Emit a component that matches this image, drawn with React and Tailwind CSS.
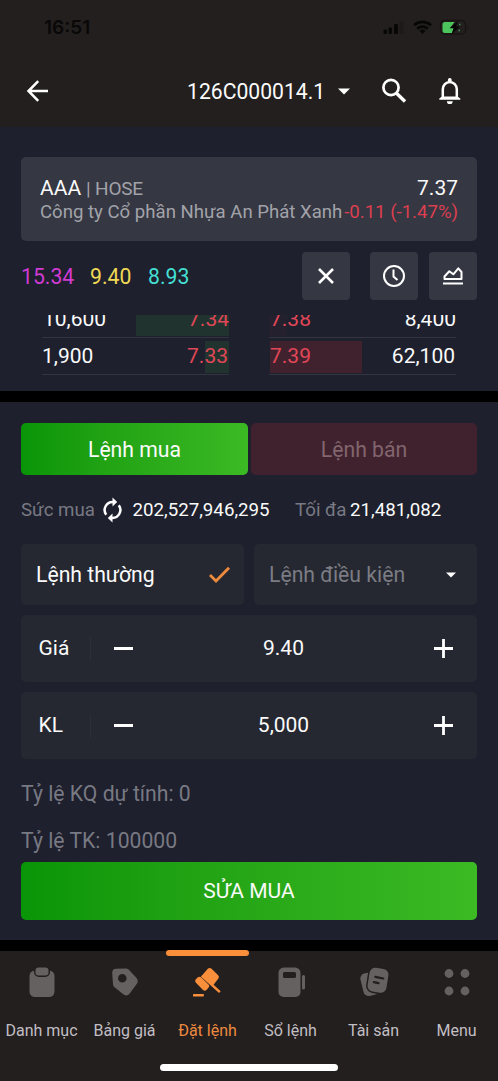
import React from 'react';

function StatusBar() {
  return (
    <div className="flex h-[54px] items-center justify-between pl-[44px] pr-[27px] pt-px text-[#090808]">
      <span className="font-['Inter'] text-[19px] leading-none font-semibold">16:51</span>
      <svg width="90" height="20" viewBox="0 0 90 20">
        <g fill="#080707">
          <rect x="2.5" y="11.500" width="3.500" height="4.500" rx="1" />
          <rect x="7.500" y="9.500" width="3.500" height="6.500" rx="1" />
          <rect x="13" y="6" width="4" height="10" rx="1" />
          <rect x="18.500" y="3" width="4" height="13" rx="1" fill="#1c1918" />
          <path d="M41.500 16l-3-3a4.300 4.300 0 0 1 6 0z" />
        </g>
        <g fill="none" stroke="#080707" strokeWidth="2.600">
          <path d="M33 7.300a12.300 12.300 0 0 1 17 0" />
          <path d="M36.200 10.700a7.700 7.700 0 0 1 10.600 0" />
        </g>
        <rect x="59.500" y="2.500" width="25" height="13.500" rx="4" fill="none" stroke="#171413" strokeWidth="1.300" />
        <path d="M86.500 7v4.500c1.300-.8 1.300-3.700 0-4.500z" fill="#171413" />
        <path d="M64 4h9.500l-4 5.500h3.500l-2 5.500H64a2.500 2.500 0 0 1-2.500-2.500V6.500A2.500 2.500 0 0 1 64 4z" fill="#4cc65c" />
        <path d="M77 3l-8.500 7.300h4l-1.700 5.700 8.200-7.500h-4z" fill="#080707" />
        <path d="M78 6.500h1.500M77.500 12.500h1.500" stroke="#3c8a58" strokeWidth="1.300" />
      </svg>
    </div>
  );
}

function Header() {
  return (
    <div className="flex h-[74px] items-center">
      <svg className="ml-[26px] shrink-0" width="24" height="24" viewBox="0 0 24 24" fill="none" stroke="#fff" strokeWidth="2.500">
        <path d="M12.200 2.200L2.500 12l9.700 9.800M2.500 12H22" />
      </svg>
      <span className="ml-[137px] w-[138px] pt-px text-[21.150px] whitespace-nowrap">126C000014.1</span>
      <svg className="ml-[13px] shrink-0" width="12" height="7" viewBox="0 0 12 7">
        <path d="M0 .5h12L6 6.500z" fill="#fff" />
      </svg>
      <svg className="ml-[31px] shrink-0" width="26" height="26" viewBox="0 0 26 26" fill="none" stroke="#fff">
        <circle cx="10" cy="9.500" r="7.600" strokeWidth="2.700" />
        <path d="M15.500 15.200l8.500 8.300" strokeWidth="3.400" />
      </svg>
      <svg className="ml-[31px] shrink-0" width="24" height="28" viewBox="0 0 24 28">
        <path d="M4.800 21.500v-9.200a7 7.300 0 0 1 14 0v9.200" fill="none" stroke="#fff" strokeWidth="2.500" />
        <path d="M1.300 22.800v-1.300l2.700-2h15.600l2.700 2v1.300zM8.900 24.200h5.800a2.900 2.900 0 0 1-5.800 0zM9.900 4.200v-1.300a1.900 1.900 0 0 1 3.800 0v1.300z" fill="#fff" />
      </svg>
    </div>
  );
}

function IconButton({ children, className = '' }) {
  return (
    <button className={`flex size-[48px] items-center justify-center rounded-[4px] bg-[#353743] ${className}`}>
      {children}
    </button>
  );
}

function StockCard() {
  return (
    <div className="h-[84px] rounded-[5px] bg-[#353743] pt-[19px] pr-[19px] pl-[19px]">
      <div className="flex h-[25px] items-center justify-between leading-none">
        <div className="flex items-baseline">
          <span className="text-[21px]">AAA</span>
          <span className="ml-[5px] text-[19px] tracking-[-0.200px] text-[#a2a3a9]">| HOSE</span>
        </div>
        <span className="text-[21px]">7.37</span>
      </div>
      <div className="flex h-[24px] items-center justify-between text-[18.600px] whitespace-nowrap">
        <span className="text-[#a2a3a9]">Công ty Cổ phần Nhựa An Phát Xanh</span>
        <span className="text-[#dc3f4f]">-0.11 (-1.47%)</span>
      </div>
    </div>
  );
}

function PriceRow() {
  return (
    <div className="mt-[11px] flex h-[48px] items-center text-[21.200px]">
      <span className="w-[69px] pt-[2px] text-[#d13bd3]">15.34</span>
      <span className="w-[58px] pt-[2px] text-[#f0d954]">9.40</span>
      <span className="pt-[2px] text-[#43dfd2]">8.93</span>
      <IconButton className="ml-auto">
        <svg className="-ml-px" width="18" height="18" viewBox="0 0 18 18" stroke="#fff" strokeWidth="2.600">
          <path d="M2 2l14 14M16 2L2 16" />
        </svg>
      </IconButton>
      <IconButton className="ml-[20px]">
        <svg width="24" height="24" viewBox="0 0 24 24" fill="none" stroke="#fff" strokeWidth="2">
          <circle cx="12" cy="12" r="10" />
          <path d="M11.500 5.500v7l4 3.500" />
        </svg>
      </IconButton>
      <IconButton className="ml-[11px]">
        <svg width="22" height="20" viewBox="0 0 22 20" fill="none" stroke="#fff" strokeWidth="2">
          <path d="M2.500 13v-2.500l4.800-5.200 4 3 5-6 3.200 3.700v7z" strokeLinejoin="round" />
          <path d="M1 17.500h20" />
        </svg>
      </IconButton>
    </div>
  );
}

function BookSide({ left, right, bar, barSide }) {
  return (
    <div className="grid h-[37px] w-[187px] border-b border-[#323440]">
      <div className={`col-start-1 row-start-1 mt-[3px] flex h-[32px] ${barSide === 'right' ? 'justify-end' : ''}`}>
        <div className={bar} />
      </div>
      <div className="col-start-1 row-start-1 mt-[3px] flex h-[32px] items-center justify-between">
        {left}
        {right}
      </div>
    </div>
  );
}

function OrderBook() {
  return (
    <div className="mt-[15px] flex h-[60px] flex-col justify-end overflow-hidden px-[21px] text-[21px]">
      <div className="flex shrink-0 justify-between">
        <BookSide barSide="right" bar="h-full w-[93px] bg-[#20332f]" left={<span className="pl-px">10,600</span>} right={<span className="text-[#e04757]">7.34</span>} />
        <BookSide barSide="left" bar="h-full w-[18px] bg-[#25202d]" left={<span className="pl-px text-[#e04757]">7.38</span>} right={<span>8,400</span>} />
      </div>
      <div className="flex shrink-0 justify-between">
        <BookSide barSide="right" bar="h-full w-[24px] bg-[#20332f]" left={<span>1,900</span>} right={<span className="pr-px text-[#e04757]">7.33</span>} />
        <BookSide barSide="left" bar="ml-px h-full w-[92px] bg-[#40222e]" left={<span className="pl-px text-[#e04757]">7.39</span>} right={<span className="pr-px">62,100</span>} />
      </div>
    </div>
  );
}

function Stepper({ label, value }) {
  return (
    <div className="mt-[10px] flex h-[67px] items-center rounded-[5px] bg-[#262831] text-[21px]">
      <span className="ml-[17.500px] w-[51.500px] pt-px">{label}</span>
      <span className="h-[24px] w-px bg-[#2c2e39]" />
      <span className="ml-[23px] h-[3px] w-[19px] bg-white" />
      <span className="flex-1 pt-px pl-px text-center">{value}</span>
      <svg className="mr-[23px]" width="21" height="21" viewBox="0 0 21 21" stroke="#fff" strokeWidth="2.800">
        <path d="M1 10.500h19M10.500 1v19" />
      </svg>
    </div>
  );
}

function OrderForm() {
  return (
    <section className="flex h-[538px] flex-col bg-[#1e202d] px-[21px] pt-[21px]">
      <div className="flex gap-[3px] text-[21.200px]">
        <button className="h-[52px] w-[227px] rounded-[5px] bg-linear-to-r from-[#089507] to-[#3bba24] pt-[2px]">Lệnh mua</button>
        <button className="h-[52px] w-[226px] rounded-[5px] bg-[#40222e] pt-[2px] text-[#82656e]">Lệnh bán</button>
      </div>
      <div className="mt-[21px] flex h-[28px] items-center text-[18.700px] whitespace-nowrap">
        <span className="w-[81px] pt-px text-[#787983]">Sức mua</span>
        <svg width="21" height="26" viewBox="0 0 21 26">
          <g fill="none" stroke="#fff" strokeWidth="2.500">
            <path d="M4.200 17.700A8 8 0 0 1 11 5" />
            <path d="M16.800 8.300A8 8 0 0 1 10 21" />
          </g>
          <path d="M10.500.5v9L15.200 5zM10.500 16.500v9L5.800 21z" fill="#fff" />
        </svg>
        <span className="ml-[9.500px] w-[162.500px] pt-px">202,527,946,295</span>
        <span className="w-[55px] pt-px text-[#787983]">Tối đa</span>
        <span className="pt-px">21,481,082</span>
      </div>
      <div className="mt-[20px] flex h-[61px] gap-[10px] text-[21.200px] whitespace-nowrap">
        <div className="flex w-[223px] items-center justify-between rounded-[5px] bg-[#262831] pr-[14px] pl-[15px]">
          <span className="pt-px">Lệnh thường</span>
          <svg width="21" height="18" viewBox="0 0 21 18" fill="none" stroke="#ef8b3c" strokeWidth="2.800">
            <path d="M1 9l6 6L20 1.700" />
          </svg>
        </div>
        <div className="flex w-[223px] items-center justify-between rounded-[5px] bg-[#262831] pr-[21px] pl-[15px] text-[#7b7c84]">
          <span className="pt-px">Lệnh điều kiện</span>
          <svg width="10" height="6" viewBox="0 0 10 6">
            <path d="M0 .5h10L5 5.500z" fill="#fff" />
          </svg>
        </div>
      </div>
      <Stepper label="Giá" value="9.40" />
      <Stepper label="KL" value="5,000" />
      <div className="mt-[12px] flex h-[46px] items-center text-[21.200px] text-[#787983]">Tỷ lệ KQ dự tính: 0</div>
      <div className="flex h-[45px] items-center pt-[2px] text-[21.200px] text-[#787983]">Tỷ lệ TK: 100000</div>
      <button className="h-[58px] shrink-0 rounded-[5px] bg-linear-to-r from-[#089507] to-[#3bba24] pt-px text-[21px]">SỬA MUA</button>
    </section>
  );
}

const navIcons = {
  list: (
    <g>
      <rect x="3.500" y="5.500" width="25" height="26.500" rx="5.500" />
      <rect x="8.700" y="1.800" width="14.600" height="9.400" rx="4" stroke="#231f1e" strokeWidth="1.500" />
    </g>
  ),
  tag: (
    <path
      fillRule="evenodd"
      d="M7 3.800l9.500-.3c1.500 0 2.600.5 3.600 1.500l7 7.500c2.200 2.400 2.200 4.700.4 6.800l-6.400 8.800c-2 2.800-4.700 3-7.200 1l-8-6.500c-1.200-1-1.900-2.200-1.900-3.700L3.200 8c0-2.800 1.300-4.100 3.800-4.200zM13.300 9a4.300 4.300 0 1 0 0 8.600 4.300 4.300 0 0 0 0-8.600z"
    />
  ),
  gavel: (
    <g>
      <path d="M10.600 9.700l5.200-5.900c1.200-1.200 2.500-1.200 3.800 0l6.300 6.300c1.300 1.300 1.300 2.700.1 4l-4.400 5.700 7.100 6.400-1.700 1.900L8.800 11.400z" />
      <path d="M4.300 13.700l1.600-1.400c1-.9 2.200-.9 3.200 0l7.400 7.100c1 1 1 2.200.1 3.200l-2.100 2.300c-1 1.100-2.300 1.100-3.500 0L4.200 18c-1.400-1.400-1.300-3 .1-4.300z" />
      <rect x="1" y="29" width="10.800" height="2.500" rx=".5" />
    </g>
  ),
  book: (
    <g>
      <path fillRule="evenodd" d="M9 2.500h11a5.500 5.500 0 0 1 5.500 5.500v19a5 5 0 0 1-5 5h-12a5 5 0 0 1-5-5V8A5.500 5.500 0 0 1 9 2.500zM9.500 7A1.500 1.500 0 0 0 8 8.500v3A1.500 1.500 0 0 0 9.500 13h10a1.500 1.500 0 0 0 1.500-1.500v-3A1.500 1.500 0 0 0 19.500 7z" />
      <rect x="27" y="10" width="3" height="14.500" rx="1.500" />
    </g>
  ),
  assets: (
    <g>
      <rect x="3.800" y="7.500" width="16" height="23" rx="5" transform="rotate(-14 12 19)" />
      <rect x="9.800" y="2.500" width="20.500" height="25.500" rx="6.500" transform="rotate(9 20 15)" stroke="#231f1e" strokeWidth="1.500" />
      <path d="M17.300 11.800l8 1.700M15.800 17.200l4.700 1" stroke="#231f1e" strokeWidth="2.200" strokeLinecap="round" />
    </g>
  ),
  menu: (
    <g>
      <circle cx="8" cy="8.500" r="4.400" />
      <circle cx="24" cy="8.500" r="4.400" />
      <circle cx="8" cy="26" r="4.400" />
      <circle cx="24" cy="26" r="4.400" />
    </g>
  ),
};

const navItems = [
  { icon: 'list', label: 'Danh mục' },
  { icon: 'tag', label: 'Bảng giá' },
  { icon: 'gavel', label: 'Đặt lệnh', active: true },
  { icon: 'book', label: 'Sổ lệnh' },
  { icon: 'assets', label: 'Tài sản' },
  { icon: 'menu', label: 'Menu' },
];

function BottomNav() {
  return (
    <nav className="flex h-[130px] flex-col bg-[#231f1e]">
      <div className="-mt-px grid h-[114px] grid-cols-6">
        {navItems.map((item) => (
          <div key={item.label} className="flex flex-col items-center">
            <div className={`h-[6px] w-full shrink-0 rounded-full ${item.active ? 'bg-[#f98e3b]' : ''}`} />
            <svg className="mt-[9px] shrink-0" width="32" height="34" viewBox="0 0 32 34" fill={item.active ? '#f98e3b' : '#656160'}>
              {navIcons[item.icon]}
            </svg>
            <span className={`mt-[20px] text-[16px] leading-[24px] whitespace-nowrap ${item.active ? 'text-[#ed8a40]' : 'text-[#c1bec4]'}`}>
              {item.label}
            </span>
          </div>
        ))}
      </div>
      <div className="ml-[160px] h-[7px] w-[178px] rounded-full bg-white" />
    </nav>
  );
}

export default function App() {
  return (
    <main className="flex h-[1081px] w-[498px] flex-col overflow-hidden bg-black font-['Roboto',sans-serif] text-[#fafafa]">
      <header className="h-[127px] shrink-0 bg-[#231f1e]">
        <StatusBar />
        <Header />
      </header>
      <section className="h-[264px] shrink-0 bg-[#1e202d] px-[21px] pt-[30px]">
        <StockCard />
        <PriceRow />
        <OrderBook />
      </section>
      <div className="h-[11px] shrink-0" />
      <OrderForm />
      <div className="h-[11px] shrink-0" />
      <BottomNav />
    </main>
  );
}
